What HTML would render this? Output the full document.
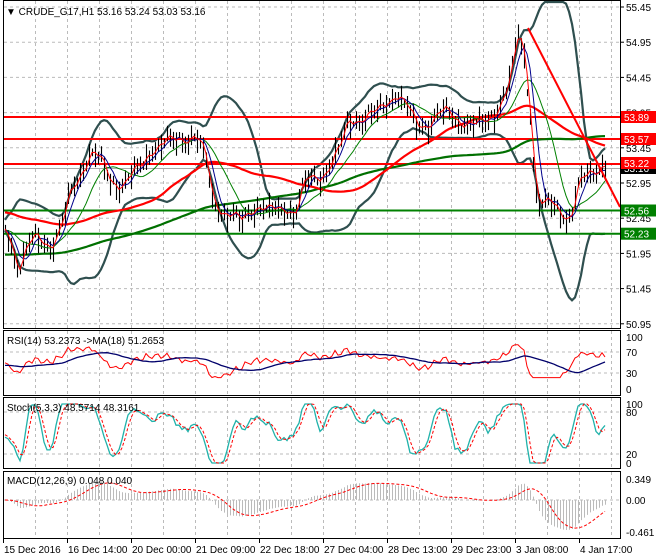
<!DOCTYPE html>
<html><head><meta charset="utf-8"><style>
html,body{margin:0;padding:0;background:#fff;width:660px;height:560px;overflow:hidden}
svg{display:block;font-family:"Liberation Sans",sans-serif;font-size:10px}
</style></head><body>
<svg id="s" width="660" height="560" xmlns="http://www.w3.org/2000/svg">
<rect x="0" y="0" width="660" height="560" fill="#fff"/>
<g id="grid" stroke="#bbb" stroke-dasharray="3,3" stroke-width="1"></g>
<g id="plot"></g>
<g fill="none" stroke="#000" stroke-width="1">
<rect x="3.5" y="0.5" width="617" height="328"/>
<rect x="3.5" y="330.5" width="617" height="65"/>
<rect x="3.5" y="397.5" width="617" height="71"/>
<rect x="3.5" y="471.5" width="617" height="67"/>
</g>
<g id="axis" fill="#000"></g>
<text x="6" y="15" fill="#000">▼ CRUDE_G17,H1  53.16 53.24 53.03 53.16</text>
<text x="7" y="344" fill="#000">RSI(14) 53.2373  -&gt;MA(18) 51.2653</text>
<text x="7" y="411" fill="#000">Stoch(5,3,3) 48.5714 48.3161</text>
<text x="7" y="484" fill="#000">MACD(12,26,9) 0.048 0.040</text>
</svg>
<script>
var NS="http://www.w3.org/2000/svg";
function el(p,t,a,txt){var e=document.createElementNS(NS,t);for(var k in a)e.setAttribute(k,a[k]);if(txt!=null)e.textContent=txt;p.appendChild(e);return e;}
var G=document.getElementById('grid'),P=document.getElementById('plot'),A=document.getElementById('axis');
for(var x=35;x<620;x+=32){[[1,328],[331,395],[398,468],[472,538]].forEach(function(r){el(G,'line',{x1:x+.5,x2:x+.5,y1:r[0],y2:r[1]});});}
var labs=["55.45","54.95","54.45","53.95","53.45","52.95","52.45","51.95","51.45","50.95"];
for(var i=0;i<10;i++){var y=7+i*35.2;el(G,'line',{x1:4,x2:620,y1:y,y2:y});}
[352,373].forEach(function(y){el(G,'line',{x1:4,x2:620,y1:y,y2:y});});
[412,454].forEach(function(y){el(G,'line',{x1:4,x2:620,y1:y,y2:y});});
el(G,'line',{x1:4,x2:620,y1:500,y2:500});
var K=[[3,225],[10,235],[18,265],[25,250],[35,240],[50,245],[60,230],[70,190],[80,170],[90,155],[100,165],[110,178],[125,180],[140,170],[150,150],[165,142],[180,135],[195,140],[205,160],[212,195],[225,210],[240,225],[255,205],[270,210],[285,205],[295,215],[305,185],[315,175],[330,162],[340,150],[348,122],[360,118],[375,112],[385,100],[395,95],[405,110],[415,122],[430,118],[445,115],[460,120],[475,125],[490,115],[505,100],[512,70],[518,30],[524,50],[530,110],[535,190],[542,210],[550,205],[560,210],[570,218],[578,185],[588,170],[598,168],[606,168]];
function tr(x){for(var i=0;i<K.length-1;i++){if(x<=K[i+1][0]){var t=(x-K[i][0])/(K[i+1][0]-K[i][0]);return K[i][1]+t*(K[i+1][1]-K[i][1]);}}return K[K.length-1][1];}
var X=[],C=[],H=[],L=[];
for(var x=5,i=0;x<=606;x+=3,i++){var n=Math.sin(i*1.7)*3+Math.sin(i*0.55)*6+Math.sin(i*0.37)*3+Math.sin(i*2.9)*2;var c=tr(x)+n;X.push(x);C.push(c);var h=3+Math.abs(Math.sin(i*1.3))*7;H.push(c-h);L.push(c+h*(0.6+Math.abs(Math.sin(i*0.7))));}
var N=C.length;
function sma(a,n,pre){var o=[];for(var i=0;i<a.length;i++){var s=0;for(var j=i-n+1;j<=i;j++)s+=(j<0?pre:a[j]);o.push(s/n);}return o;}
function ema(a,n){var o=[],k=2/(n+1),v=a[0];for(var i=0;i<a.length;i++){v=a[i]*k+v*(1-k);o.push(v);}return o;}
function pl(xs,ys,attrs){var d="";for(var i=0;i<ys.length;i++)d+=(i?"L":"M")+xs[i].toFixed(1)+" "+ys[i].toFixed(1);attrs.d=d;attrs.fill="none";return el(P,'path',attrs);}
var m20=sma(C,20,225),up=[],dn=[];
for(var i=0;i<N;i++){var s=0;for(var j=i-19;j<=i;j++){var v=(j<0?225:C[j])-m20[i];s+=v*v;}var sd=Math.sqrt(s/20)+2;up.push(Math.max(2,m20[i]-2.0*sd));dn.push(Math.min(327,m20[i]+2.0*sd));}
pl(X,up,{stroke:"#2f4f4f","stroke-width":2.2});pl(X,dn,{stroke:"#2f4f4f","stroke-width":2.2});
[[117,"#f00"],[139,"#f00"],[164,"#f00"],[210.5,"#008000"],[233.7,"#008000"]].forEach(function(l){el(P,'line',{x1:4,x2:620,y1:l[0],y2:l[0],stroke:l[1],"stroke-width":2});});
el(P,'line',{x1:4,x2:620,y1:168.5,y2:168.5,stroke:"#aaa","stroke-width":1});
pl(X,sma(C,100,255),{stroke:"#007000","stroke-width":2.2});
pl(X,sma(C,50,212),{stroke:"#f00","stroke-width":2.2});
var d="";for(var i=0;i<N;i++){d+="M"+(X[i]+.5)+" "+H[i].toFixed(1)+"V"+L[i].toFixed(1);}
el(P,'path',{d:d,stroke:"#000","stroke-width":1.1,fill:"none"});
pl(X,sma(C,13,230),{stroke:"#008000","stroke-width":1});
pl(X,sma(C,5,230),{stroke:"#00008b","stroke-width":1});
pl(X,sma(C,2,230),{stroke:"#f00","stroke-width":1});
el(P,'line',{x1:528,y1:28,x2:620,y2:207,stroke:"#f00","stroke-width":2});
var m14=sma(C,14,225),R=[];for(var i=0;i<N;i++){var r=52+(m14[i]-C[i])*0.6+Math.sin(i*1.9)*4;R.push(Math.max(22,Math.min(85,r)));}
var RS=sma(R,18,45);
pl(X,R.map(function(r){return 389-r*0.52;}),{stroke:"#f00","stroke-width":1});
pl(X,RS.map(function(r){return 389-r*0.52;}),{stroke:"#00006b","stroke-width":1.3});
var Kp=[];for(var i=0;i<N;i++){var hh=1e9,ll=-1e9;for(var j=Math.max(0,i-4);j<=i;j++){hh=Math.min(hh,H[j]);ll=Math.max(ll,L[j]);}Kp.push(100*(ll-C[i])/(ll-hh));}
var SK=sma(Kp,3,50),SD=sma(SK,3,50);
function sy(v){return 463-Math.max(0,Math.min(100,(v-50)*1.5+50))*0.59;}
pl(X,SK.map(sy),{stroke:"#20b2aa","stroke-width":1.3});
pl(X,SD.map(sy),{stroke:"#f00","stroke-width":1,"stroke-dasharray":"3,2"});
var pr=C.map(function(y){return 55.45-(y-7)/70.4;});
var e12=ema(pr,12),e26=ema(pr,26),M=[];for(var i=0;i<N;i++)M.push(e12[i]-e26[i]);
var MS=sma(M,9,0);
function my(v){return 500-v*(v>0?60:69);}
d="";for(var i=0;i<N;i++){d+="M"+(X[i]+.5)+" 500V"+my(M[i]).toFixed(1);}
el(P,'path',{d:d,stroke:"#bbb","stroke-width":1,fill:"none"});
pl(X,MS.map(my),{stroke:"#f00","stroke-width":1,"stroke-dasharray":"3,2"});
for(var i=0;i<10;i++){var y=7+i*35.2;el(A,'line',{x1:620,x2:624,y1:y,y2:y,stroke:"#000"});el(A,'text',{x:626,y:y+4},labs[i]);}
[[100,337],[70,352],[30,373],[0,389]].forEach(function(a){el(A,'text',{x:626,y:a[1]+4},a[0]);});
[[100,404],[80,412],[20,454],[0,463]].forEach(function(a){el(A,'text',{x:626,y:a[1]+4},a[0]);});
[["0.349",479],["0.00",500],["-0.461",532]].forEach(function(a){el(A,'text',{x:626,y:a[1]+4},a[0]);});
el(A,'rect',{x:621,y:163,width:35,height:11,fill:"#000"});el(A,'text',{x:624,y:172,fill:"#fff"},"53.16");
[["53.89",117,"#f00"],["53.57",139,"#f00"],["53.22",163,"#f00"],["52.56",210.5,"#008000"],["52.23",233.7,"#008000"]].forEach(function(a){el(A,'rect',{x:621,y:a[1]-6,width:35,height:12,fill:a[2]});el(A,'text',{x:624,y:a[1]+4,fill:"#fff"},a[0]);});
var dates=["15 Dec 2016","16 Dec 14:00","20 Dec 00:00","21 Dec 09:00","22 Dec 18:00","27 Dec 04:00","28 Dec 13:00","29 Dec 23:00","3 Jan 08:00","4 Jan 17:00"];
for(var i=0;i<10;i++){var x=3+i*64;el(A,'line',{x1:x+.5,x2:x+.5,y1:539,y2:543,stroke:"#000"});el(A,'text',{x:x+1,y:553},dates[i]);}
</script>
</body></html>
